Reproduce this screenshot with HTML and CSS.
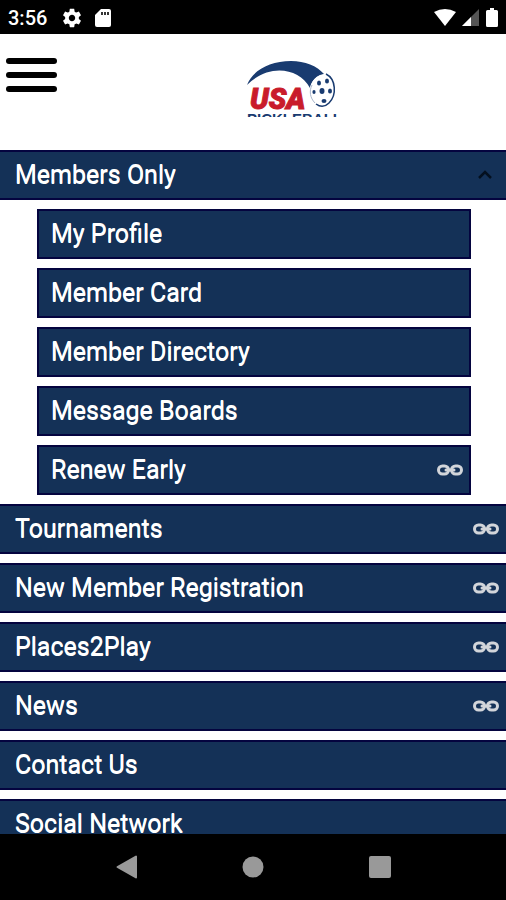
FILE: index.html
```html
<!DOCTYPE html>
<html lang="en">
<head>
    <meta charset="UTF-8">
    <meta name="viewport" content="width=device-width, initial-scale=1.0">
    <title>USA Pickleball</title>
    <link rel="stylesheet" href="styles.css">
</head>
<body>
    <svg class="defs" width="0" height="0" aria-hidden="true">
        <symbol id="link" viewBox="0 0 26 12">
            <rect x="1.5" y="2" width="10" height="8" rx="4" fill="none" stroke="#d2d5da" stroke-width="3"/>
            <rect x="14.5" y="2" width="10" height="8" rx="4" fill="none" stroke="#d2d5da" stroke-width="3"/>
            <path d="M9 6h8" stroke="#d2d5da" stroke-width="3" stroke-linecap="round"/>
        </symbol>
    </svg>

    <div class="status-bar">
        <span class="clock">3:56</span>
        <svg class="status-icon" width="22" height="22" viewBox="0 0 24 24" fill="#fff">
            <path d="M19.43 12.98c.04-.32.07-.64.07-.98s-.03-.66-.07-.98l2.11-1.65c.19-.15.24-.42.12-.64l-2-3.46c-.12-.22-.39-.3-.61-.22l-2.49 1c-.52-.4-1.08-.73-1.69-.98l-.38-2.65C14.46 2.18 14.25 2 14 2h-4c-.25 0-.46.18-.49.42l-.38 2.65c-.61.25-1.17.59-1.69.98l-2.49-1c-.23-.09-.49 0-.61.22l-2 3.46c-.13.22-.07.49.12.64l2.11 1.65c-.04.32-.07.65-.07.98s.03.66.07.98l-2.11 1.65c-.19.15-.24.42-.12.64l2 3.46c.12.22.39.3.61.22l2.49-1c.52.4 1.08.73 1.69.98l.38 2.65c.03.24.24.42.49.42h4c.25 0 .46-.18.49-.42l.38-2.65c.61-.25 1.17-.59 1.69-.98l2.49 1c.23.09.49 0 .61-.22l2-3.46c.12-.22.07-.49-.12-.64l-2.11-1.65zM12 15.5c-1.93 0-3.5-1.57-3.5-3.5s1.57-3.5 3.5-3.5 3.5 1.57 3.5 3.5-1.57 3.5-3.5 3.5z"/>
        </svg>
        <svg class="status-icon" width="16" height="20" viewBox="0 0 16 20">
            <path d="M6 1h8a2 2 0 0 1 2 2v14a2 2 0 0 1-2 2H2a2 2 0 0 1-2-2V7z" fill="#fff"/>
            <path d="M6 4h2v3H6zM9 4h2v3H9zM12 4h2v3h-2z" fill="#333"/>
        </svg>
        <div class="signals">
            <svg width="22" height="20" viewBox="0 0 22 20">
                <path d="M0 4Q11-2 22 4L11 18z" fill="#fff"/>
            </svg>
            <svg width="18" height="20" viewBox="0 0 18 20">
                <path d="M17 1v17H0z" fill="#555"/>
                <path d="M9 9v9H0z" fill="#fff"/>
            </svg>
            <svg width="12" height="20" viewBox="0 0 12 20">
                <path d="M4 0h4v2h2.500a1.500 1.500 0 0 1 1.500 1.500v14a1.500 1.500 0 0 1-1.500 1.500h-9A1.500 1.500 0 0 1 0 17.500v-14A1.500 1.500 0 0 1 1.500 2H4z" fill="#fff"/>
            </svg>
        </div>
    </div>

    <header class="header">
        <button class="menu-button" aria-label="Menu">
            <span class="menu-line"></span>
            <span class="menu-line"></span>
            <span class="menu-line"></span>
        </button>
        <svg class="logo" width="92" height="57" viewBox="10 10 92 57" role="img" aria-label="USA Pickleball">
            <path d="M11 35C17 20 34 11 55 11c14 0 26 5 33 13-8 2-13 7-14 14C63 18 33 13 11 35z" fill="#193b70"/>
            <ellipse cx="86" cy="40" rx="12" ry="16" fill="#fff" transform="rotate(14 86 40)"/>
            <path d="M90 24c10 5 11 21 3 29-4 4-9 4-13 1" fill="none" stroke="#193b70" stroke-width="1.500"/>
            <path d="M76 35c-3 6-2 13 3 18" fill="none" stroke="#aab6cb" stroke-width="1"/>
            <g fill="#193b70">
                <ellipse cx="83" cy="33" rx="2" ry="2.500"/>
                <ellipse cx="91" cy="31" rx="2" ry="2.500"/>
                <ellipse cx="86" cy="41" rx="2.500" ry="3"/>
                <ellipse cx="78" cy="42" rx="1.600" ry="2"/>
                <ellipse cx="94" cy="41" rx="2" ry="2.600"/>
                <ellipse cx="88" cy="51" rx="2.500" ry="2"/>
            </g>
            <text class="logo-usa" x="14" y="59">USA</text>
            <text class="logo-name" x="11" y="74">PICKLEBALL</text>
        </svg>
    </header>

    <main class="content">
        <nav class="menu">
            <button class="menu-item" aria-expanded="true">
                Members Only
                <svg class="chevron" width="16" height="10" viewBox="0 0 16 10">
                    <path d="M2 8l6-6 6 6" fill="none" stroke="#04101f" stroke-width="2.500"/>
                </svg>
            </button>
            <div class="submenu">
                <a class="menu-item" href="#">My Profile</a>
                <a class="menu-item" href="#">Member Card</a>
                <a class="menu-item" href="#">Member Directory</a>
                <a class="menu-item" href="#">Message Boards</a>
                <a class="menu-item" href="#">Renew Early <svg class="link-icon"><use href="#link"/></svg></a>
            </div>
            <a class="menu-item" href="#">Tournaments <svg class="link-icon"><use href="#link"/></svg></a>
            <a class="menu-item" href="#">New Member Registration <svg class="link-icon"><use href="#link"/></svg></a>
            <a class="menu-item" href="#">Places2Play <svg class="link-icon"><use href="#link"/></svg></a>
            <a class="menu-item" href="#">News <svg class="link-icon"><use href="#link"/></svg></a>
            <a class="menu-item" href="#">Contact Us</a>
            <a class="menu-item" href="#">Social Network</a>
        </nav>
    </main>

    <div class="system-nav">
        <button class="nav-button" aria-label="Back">
            <svg width="22" height="24" viewBox="0 0 22 24"><path d="M1.500 12L20 1.500v21z" fill="#999" stroke="#999" stroke-width="2" stroke-linejoin="round"/></svg>
        </button>
        <button class="nav-button" aria-label="Home">
            <svg width="22" height="22" viewBox="0 0 22 22"><circle cx="11" cy="11" r="10.500" fill="#999"/></svg>
        </button>
        <button class="nav-button" aria-label="Recent apps">
            <svg width="22" height="22" viewBox="0 0 22 22"><rect width="22" height="22" rx="2" fill="#999"/></svg>
        </button>
    </div>
</body>
</html>
```
FILE: styles.css
```css
* {
    box-sizing: border-box;
}

body {
    margin: 0;
    height: 100vh;
    display: flex;
    flex-direction: column;
    overflow: hidden;
    background-color: #fff;
    font-family: Roboto, "Liberation Sans", sans-serif;
}

button {
    border: none;
    background: none;
    padding: 0;
    font: inherit;
    cursor: pointer;
}

.defs {
    position: absolute;
}

.status-bar {
    display: flex;
    flex: none;
    align-items: center;
    height: 34px;
    padding: 2px 8px 0;
    background-color: #000;
    color: #fff;
}

.clock {
    font-size: 20px;
    font-weight: 500;
    line-height: 24px;
    margin-right: 14px;
}

.status-icon {
    margin-right: 12px;
}

.signals {
    display: flex;
    gap: 6px;
    margin-left: auto;
}

.header {
    display: grid;
    grid-template-columns: 1fr auto 1fr;
    flex: none;
    align-items: start;
    height: 116px;
    padding: 24px 6px 0;
}

.menu-button {
    display: flex;
    flex-direction: column;
    gap: 8px;
    width: 51px;
}

.menu-line {
    width: 100%;
    height: 6px;
    border-radius: 3px;
    background-color: #000;
}

.logo {
    grid-column: 2;
    margin: 2px 0 0 78px;
}

.logo-usa {
    font: italic 900 29px Roboto, sans-serif;
    fill: #c91c2b;
    stroke: #c91c2b;
    stroke-width: 1px;
}

.logo-name {
    font: bold 15px "Liberation Sans", sans-serif;
    fill: #193b70;
}

.content {
    flex: 1;
    min-height: 0;
    overflow: hidden;
}

.menu,
.submenu {
    display: flex;
    flex-direction: column;
    gap: 9px;
}

.submenu {
    padding: 0 35px 0 37px;
}

.menu-item {
    display: flex;
    align-items: center;
    justify-content: space-between;
    height: 50px;
    padding: 0 7px 0 15px;
    border: solid #04043f;
    border-width: 2px 0;
    background-color: #143157;
    color: #fff;
    font-size: 25px;
    line-height: 30px;
    text-decoration: none;
    text-shadow: 0 1px 0 #fff;
}

.submenu .menu-item {
    border-width: 2px;
    padding: 0 6px 0 12px;
}

.chevron {
    margin-right: 6px;
}

.link-icon {
    width: 26px;
    height: 12px;
}

.system-nav {
    display: flex;
    flex: none;
    align-items: center;
    justify-content: center;
    height: 66px;
    background-color: #000;
}

.nav-button {
    display: flex;
    justify-content: center;
    width: 25%;
}
```
